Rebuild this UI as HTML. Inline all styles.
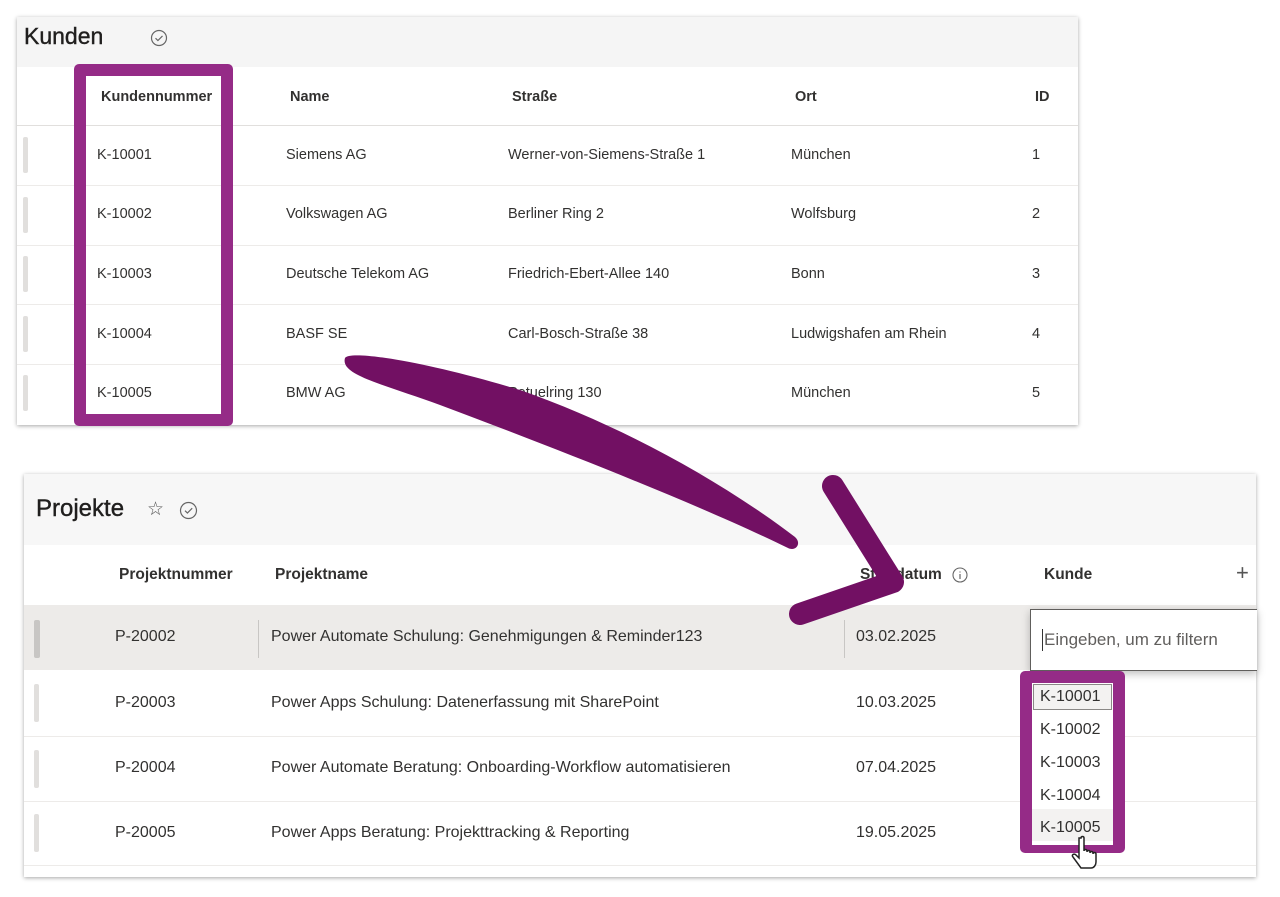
<!DOCTYPE html><html><head><style>
body{margin:0;width:1280px;height:897px;background:#fff;position:relative;overflow:hidden;font-family:"Liberation Sans",sans-serif;color:#323130}
.a{position:absolute;white-space:nowrap}
.p{position:absolute;background:#fff;box-shadow:0 1px 4px rgba(0,0,0,.35)}
.h{font-weight:bold;font-size:14.5px;color:#323130}
.c{font-size:14.5px;color:#323130}
.bar{position:absolute;width:5px;height:36px;background:#e1dfdd;border-radius:2px}
.ln{position:absolute;height:1px;background:#edebe9}
</style></head><body>
<!-- top panel -->
<div class="p" style="left:17px;top:17px;width:1061px;height:408px">
<div class="a" style="left:0;top:0;width:1061px;height:50px;background:#f5f5f5"></div>
<div class="a" style="left:7px;top:6px;font-size:23px;color:#201f1e;-webkit-text-stroke:0.4px #201f1e">Kunden</div>
<svg class="a" style="left:133px;top:12px" width="18" height="18"><circle cx="9" cy="9" r="7.5" fill="none" stroke="#666" stroke-width="1.2"/><path d="M5.5 9.2l2.4 2.3 4.6-4.6" fill="none" stroke="#666" stroke-width="1.2"/></svg>
<div class="ln" style="left:0;top:108px;width:1061px;background:#e1dfdd"></div>
<div class="a h" style="left:84px;top:72px">Kundennummer</div>
<div class="a h" style="left:273px;top:72px">Name</div>
<div class="a h" style="left:495px;top:72px">Straße</div>
<div class="a h" style="left:778px;top:72px">Ort</div>
<div class="a h" style="left:1018px;top:72px">ID</div>
</div>
<div class="bar" style="left:23px;top:137px"></div>
<div class="bar" style="left:23px;top:197px"></div>
<div class="bar" style="left:23px;top:256px"></div>
<div class="bar" style="left:23px;top:316px"></div>
<div class="bar" style="left:23px;top:375px"></div>
<div class="ln" style="left:17px;top:185px;width:1061px"></div>
<div class="ln" style="left:17px;top:245px;width:1061px"></div>
<div class="ln" style="left:17px;top:304px;width:1061px"></div>
<div class="ln" style="left:17px;top:364px;width:1061px"></div>
<div class="a c" style="left:97px;top:147px">K-10001</div><div class="a c" style="left:286px;top:147px">Siemens AG</div><div class="a c" style="left:508px;top:147px">Werner-von-Siemens-Straße 1</div><div class="a c" style="left:791px;top:147px">München</div><div class="a c" style="left:1032px;top:147px">1</div>
<div class="a c" style="left:97px;top:206px">K-10002</div><div class="a c" style="left:286px;top:206px">Volkswagen AG</div><div class="a c" style="left:508px;top:206px">Berliner Ring 2</div><div class="a c" style="left:791px;top:206px">Wolfsburg</div><div class="a c" style="left:1032px;top:206px">2</div>
<div class="a c" style="left:97px;top:266px">K-10003</div><div class="a c" style="left:286px;top:266px">Deutsche Telekom AG</div><div class="a c" style="left:508px;top:266px">Friedrich-Ebert-Allee 140</div><div class="a c" style="left:791px;top:266px">Bonn</div><div class="a c" style="left:1032px;top:266px">3</div>
<div class="a c" style="left:97px;top:326px">K-10004</div><div class="a c" style="left:286px;top:326px">BASF SE</div><div class="a c" style="left:508px;top:326px">Carl-Bosch-Straße 38</div><div class="a c" style="left:791px;top:326px">Ludwigshafen am Rhein</div><div class="a c" style="left:1032px;top:326px">4</div>
<div class="a c" style="left:97px;top:385px">K-10005</div><div class="a c" style="left:286px;top:385px">BMW AG</div><div class="a c" style="left:508px;top:385px">Petuelring 130</div><div class="a c" style="left:791px;top:385px">München</div><div class="a c" style="left:1032px;top:385px">5</div>
<div class="a" style="left:74px;top:64px;width:135px;height:338px;border:12px solid #952b87;border-radius:5px"></div>

<!-- bottom panel -->
<div class="p" style="left:24px;top:474px;width:1232px;height:403px">
<div class="a" style="left:0;top:0;width:1232px;height:71px;background:#f7f7f7"></div>
<div class="a" style="left:12px;top:21px;font-size:24px;color:#201f1e;-webkit-text-stroke:0.4px #201f1e">Projekte</div>
<div class="a" style="left:123px;top:24px;font-size:19px;color:#555">☆</div>
<svg class="a" style="left:155px;top:27px" width="19" height="19"><circle cx="9.5" cy="9.5" r="8" fill="none" stroke="#666" stroke-width="1.2"/><path d="M6 9.7l2.4 2.3 4.8-4.8" fill="none" stroke="#666" stroke-width="1.2"/></svg>
<div class="a h" style="left:95px;top:92px;font-size:15.5px">Projektnummer</div>
<div class="a h" style="left:251px;top:92px;font-size:15.5px">Projektname</div>
<div class="a h" style="left:836px;top:92px;font-size:15.5px">Startdatum</div>
<svg class="a" style="left:928px;top:93px" width="16" height="16"><circle cx="8" cy="8" r="7" fill="none" stroke="#666" stroke-width="1.1"/><path d="M8 7v5M8 4.5v1" stroke="#666" stroke-width="1.2"/></svg>
<div class="a h" style="left:1020px;top:92px;font-size:15.5px">Kunde</div>
<div class="a" style="left:1212px;top:86px;font-size:22px;color:#555">+</div>
<div class="a" style="left:0;top:131px;width:1232px;height:65px;background:#edebe9"></div>
<div class="a" style="left:234px;top:146px;width:1px;height:38px;background:#c8c6c4"></div>
<div class="a" style="left:820px;top:146px;width:1px;height:38px;background:#c8c6c4"></div>
<div class="ln" style="left:0;top:262px;width:1232px"></div>
<div class="ln" style="left:0;top:327px;width:1232px"></div>
<div class="ln" style="left:0;top:391px;width:1232px"></div>
</div>
<div class="bar" style="left:34px;top:620px;width:6px;height:38px;background:#c8c6c4"></div>
<div class="bar" style="left:34px;top:684px;height:38px"></div>
<div class="bar" style="left:34px;top:750px;height:38px"></div>
<div class="bar" style="left:34px;top:814px;height:38px"></div>
<div class="a c" style="left:115px;top:628px;font-size:16px">P-20002</div><div class="a c" style="left:271px;top:628px;font-size:16px">Power Automate Schulung: Genehmigungen &amp; Reminder123</div><div class="a c" style="left:856px;top:628px;font-size:16px">03.02.2025</div>
<div class="a c" style="left:115px;top:694px;font-size:16px">P-20003</div><div class="a c" style="left:271px;top:694px;font-size:16px">Power Apps Schulung: Datenerfassung mit SharePoint</div><div class="a c" style="left:856px;top:694px;font-size:16px">10.03.2025</div>
<div class="a c" style="left:115px;top:759px;font-size:16px">P-20004</div><div class="a c" style="left:271px;top:759px;font-size:16px">Power Automate Beratung: Onboarding-Workflow automatisieren</div><div class="a c" style="left:856px;top:759px;font-size:16px">07.04.2025</div>
<div class="a c" style="left:115px;top:824px;font-size:16px">P-20005</div><div class="a c" style="left:271px;top:824px;font-size:16px">Power Apps Beratung: Projekttracking &amp; Reporting</div><div class="a c" style="left:856px;top:824px;font-size:16px">19.05.2025</div>
<div class="a" style="left:1030px;top:609px;width:226px;height:60px;background:#fff;border:1.5px solid #605e5c;border-right:none;box-shadow:0 3px 8px rgba(0,0,0,.25)"></div>
<div class="a" style="left:1042px;top:629px;width:1px;height:22px;background:#333"></div>
<div class="a" style="left:1044px;top:630px;font-size:17px;color:#605e5c">Eingeben, um zu filtern</div>
<div class="a" style="left:1020px;top:671px;width:105px;height:182px;background:#952b87;border-radius:5px"></div>
<div class="a" style="left:1032px;top:683px;width:81px;height:162px;background:#fff"></div>
<div class="a" style="left:1033px;top:684px;width:79px;height:26px;border:1px solid #8a8886;box-sizing:border-box;background:#f3f2f1"></div>
<div class="a" style="left:1032px;top:809px;width:81px;height:32px;background:#f3f2f1"></div>
<div class="a c" style="left:1040px;top:688px;font-size:16px">K-10001</div>
<div class="a c" style="left:1040px;top:721px;font-size:16px">K-10002</div>
<div class="a c" style="left:1040px;top:754px;font-size:16px">K-10003</div>
<div class="a c" style="left:1040px;top:787px;font-size:16px">K-10004</div>
<div class="a c" style="left:1040px;top:819px;font-size:16px">K-10005</div>
<svg class="a" style="left:1070px;top:835px" width="32" height="40"><path d="M9 3v20l-3-3c-2-2-5 0-3 2l8 11h10c3 0 5-3 5-6v-8c0-2-3-2-3 0v-1c0-2-3-2-3 0v-1c0-2-3-2-3 0v-1c0-2-3-2-3 0V3c0-2-3-2-3 0z" fill="#fff" stroke="#222" stroke-width="1.5"/></svg>

<!-- arrow -->
<svg class="a" style="left:0;top:0" width="1280" height="897">
<path d="M345 358 C 350 350 420 360 520 390 C 620 425 720 480 795 537 C 802 543 796 552 788 548 C 700 505 560 450 440 405 C 380 383 340 375 345 358Z" fill="#721063"/>
<path d="M833 486 L 893 582 L 800 614" fill="none" stroke="#721063" stroke-width="22" stroke-linecap="round" stroke-linejoin="round"/>
</svg>
</body></html>
